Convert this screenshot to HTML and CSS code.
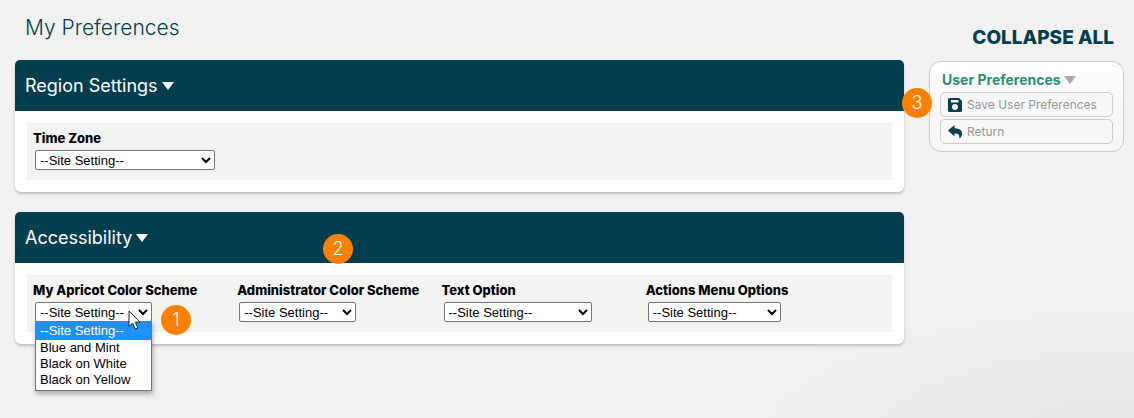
FILE: index.html
```html
<!DOCTYPE html>
<html lang="en">
  <head>
    <meta charset="UTF-8" />
    <meta name="viewport" content="width=device-width, initial-scale=1.0" />
    <title>My Preferences</title>
    <link rel="stylesheet" href="styles.css" />
  </head>
  <body>
    <div class="page">
      <main class="content">
        <h1>My Preferences</h1>

        <section class="panel">
          <h2 class="panel-header">
            <button type="button" class="toggle" aria-expanded="true">
              Region Settings
              <svg class="caret" viewBox="0 0 12 8"><path d="M0 0h12L6 8z" /></svg>
            </button>
          </h2>
          <div class="panel-body">
            <div class="fields">
              <div class="field">
                <label for="timeZone">Time Zone</label>
                <select id="timeZone" class="select-time-zone">
                  <option>--Site Setting--</option>
                </select>
              </div>
            </div>
          </div>
        </section>

        <section class="panel">
          <h2 class="panel-header">
            <button type="button" class="toggle" aria-expanded="true">
              Accessibility
              <svg class="caret" viewBox="0 0 12 8"><path d="M0 0h12L6 8z" /></svg>
            </button>
          </h2>
          <span class="badge badge-2">2</span>
          <div class="panel-body">
            <div class="fields">
              <div class="field">
                <label for="myScheme">My Apricot Color Scheme</label>
                <select id="myScheme" class="select-scheme">
                  <option>--Site Setting--</option>
                  <option>Blue and Mint</option>
                  <option>Black on White</option>
                  <option>Black on Yellow</option>
                </select>
                <ul class="options" role="listbox" aria-label="My Apricot Color Scheme">
                  <li role="option" aria-selected="true" class="selected">--Site Setting--</li>
                  <li role="option">Blue and Mint</li>
                  <li role="option">Black on White</li>
                  <li role="option">Black on Yellow</li>
                </ul>
                <svg class="cursor" viewBox="0 0 13 20">
                  <path d="M1 1v15.5l3.6-3.4 2.6 5.9 2.6-1.1-2.5-5.8h4.9z" />
                </svg>
                <span class="badge badge-1">1</span>
              </div>
              <div class="field">
                <label for="adminScheme">Administrator Color Scheme</label>
                <select id="adminScheme" class="select-scheme">
                  <option>--Site Setting--</option>
                </select>
              </div>
              <div class="field">
                <label for="textOption">Text Option</label>
                <select id="textOption" class="select-text">
                  <option>--Site Setting--</option>
                </select>
              </div>
              <div class="field">
                <label for="actionsMenu">Actions Menu Options</label>
                <select id="actionsMenu" class="select-actions">
                  <option>--Site Setting--</option>
                </select>
              </div>
            </div>
          </div>
        </section>
      </main>

      <aside class="sidebar">
        <button type="button" class="collapse-all">COLLAPSE ALL</button>
        <div class="menu">
          <span class="badge badge-3">3</span>
          <button type="button" class="menu-title" aria-expanded="true">
            User Preferences
            <svg class="caret" viewBox="0 0 12 8"><path d="M0 0h12L6 8z" /></svg>
          </button>
          <button type="button" class="action">
            <svg class="icon" viewBox="0 0 14 14">
              <path fill-rule="evenodd" d="M1.500 0H11l3 3v9.500a1.500 1.500 0 0 1-1.500 1.500h-11A1.500 1.500 0 0 1 0 12.500v-11A1.500 1.500 0 0 1 1.500 0zM3 2v2.500h7.500V2zM7 6a3 3 0 1 0 0 6 3 3 0 0 0 0-6z" />
            </svg>
            Save User Preferences
          </button>
          <button type="button" class="action">
            <svg class="icon" viewBox="0 0 14 14">
              <path d="M0 5.500L6.500 0v3.200c5 .2 7.500 2 7.500 5.300 0 2-.8 3.500-2 4.700-.3.300-.8.100-.7-.4.500-3-.8-4.400-4.800-4.600v3.300z" />
            </svg>
            Return
          </button>
        </div>
      </aside>
    </div>
  </body>
</html>
```

FILE: styles.css
```css
* {
  box-sizing: border-box;
}

body {
  margin: 0;
  min-height: 100vh;
  background: radial-gradient(ellipse 420px 150px at 100% 106%, #e5e5e5, #f1f1f1) #f1f1f1;
  font-family: Inter, Arial, sans-serif;
  color: #000;
}

button {
  padding: 0;
  border: none;
  background: none;
  font-family: inherit;
  cursor: pointer;
}

.page {
  display: flex;
  gap: 25px;
  padding: 0 10px 20px 15px;
}

.content {
  flex: 1;
}

h1 {
  margin: 0;
  padding: 14px 10px 18px;
  color: #033e4f;
  font-size: 21px;
  font-weight: 300;
  line-height: 28px;
}

.panel {
  position: relative;
  margin-bottom: 20px;
  background-color: #fff;
  border-radius: 6px;
  box-shadow: 0 2px 3px rgba(0, 0, 0, 0.2);
}

.panel-header {
  margin: 0;
  padding: 0 10px;
  background-color: #033e4f;
  border-radius: 5px 5px 0 0;
  font-size: 18px;
}

.toggle {
  display: flex;
  align-items: center;
  gap: 4px;
  color: #fff;
  font-size: 18px;
  font-weight: 400;
  line-height: 51px;
}

.caret {
  width: 12px;
  height: 8px;
  fill: currentColor;
}

.panel-body {
  padding: 12px;
}

.fields {
  display: grid;
  grid-template-columns: repeat(4, 1fr);
  padding: 6px 42px 10px 6px;
  background-color: #f3f3f2;
}

.field {
  position: relative;
}

label {
  display: block;
  margin-bottom: 3px;
  font-size: 13px;
  font-weight: 800;
  line-height: 18px;
  white-space: nowrap;
}

select {
  display: block;
  height: 20px;
  margin-left: 2px;
  border: 1px solid #767676;
  border-radius: 2px;
  background-color: #fff;
  color: #000;
  font-family: "Liberation Sans", Arial, sans-serif;
  font-size: 13px;
}

.select-time-zone {
  width: 180px;
}

.select-scheme {
  width: 117px;
}

.select-text {
  width: 148px;
}

.select-actions {
  width: 133px;
}

.options {
  position: absolute;
  top: 40px;
  left: 2px;
  z-index: 1;
  width: 117px;
  margin: 0;
  padding: 0 0 2px;
  border: 1px solid #767676;
  background-color: #fff;
  box-shadow: 1px 3px 5px rgba(0, 0, 0, 0.3);
  list-style: none;
  font-family: "Liberation Sans", Arial, sans-serif;
  font-size: 13px;
  line-height: 16px;
}

.options li {
  padding-left: 4px;
}

.options .selected {
  background-color: #1e90ff;
  color: #fff;
  line-height: 18px;
}

.cursor {
  position: absolute;
  top: 29px;
  left: 95px;
  z-index: 2;
  width: 13px;
  height: 20px;
  fill: #fff;
  stroke: #222;
  stroke-width: 1;
}

.badge {
  position: absolute;
  z-index: 2;
  width: 30px;
  height: 30px;
  border-radius: 50%;
  background-color: #ff8000;
  color: #fff;
  font-size: 18px;
  font-weight: 300;
  line-height: 30px;
  text-align: center;
}

.badge-1 {
  top: 24px;
  left: 128px;
}

.badge-2 {
  top: 22px;
  left: 308px;
}

.badge-3 {
  top: 26px;
  left: -28px;
}

.sidebar {
  display: flex;
  flex-direction: column;
  width: 195px;
  padding-top: 26px;
}

.collapse-all {
  align-self: flex-end;
  margin: 0 10px 11px 0;
  color: #033e4f;
  font-size: 19px;
  font-weight: 800;
  line-height: 24px;
}

.menu {
  position: relative;
  display: flex;
  flex-direction: column;
  gap: 2px;
  padding: 8px 10px 7px;
  border: 1px solid #ccc;
  border-radius: 12px;
  background: linear-gradient(#fff, #f7f7f7 50%);
}

.menu-title {
  display: flex;
  align-items: center;
  gap: 3px;
  padding-left: 2px;
  color: #2b8c7c;
  font-size: 14px;
  font-weight: 700;
  line-height: 20px;
}

.menu-title .caret {
  fill: #aaa;
}

.action {
  display: flex;
  align-items: center;
  gap: 5px;
  height: 25px;
  padding: 0 7px;
  border: 1px solid #ccc;
  border-radius: 5px;
  background-color: #f7f7f7;
  color: #999;
  font-size: 12px;
  white-space: nowrap;
}

.icon {
  width: 14px;
  height: 14px;
  fill: #033e4f;
}
```
